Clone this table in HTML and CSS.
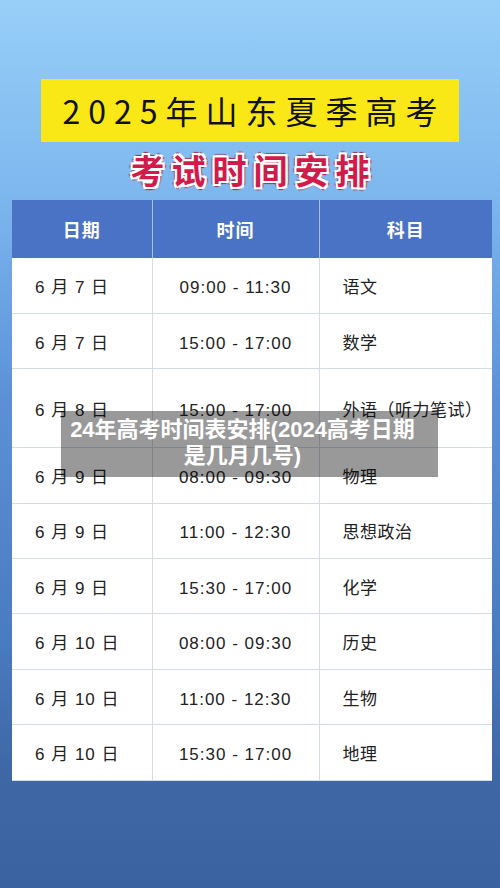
FILE: index.html
```html
<!DOCTYPE html>
<html lang="zh-CN">
<head>
    <meta charset="UTF-8">
    <title>2025年山东夏季高考考试时间安排</title>
    <link rel="stylesheet" href="styles.css">
</head>
<body>

    <div class="poster">
        <div class="banner">2025年山东夏季高考</div>
        <h1 class="subtitle">考试时间安排</h1>

        <table class="schedule">
            <thead>
                <tr>
                    <th class="col-date">日期</th>
                    <th class="col-time">时间</th>
                    <th class="col-subject">科目</th>
                </tr>
            </thead>
            <tbody>
                <tr>
                    <td class="date">6 月 7 日</td>
                    <td class="time">09:00 - 11:30</td>
                    <td class="subject">语文</td>
                </tr>
                <tr>
                    <td class="date">6 月 7 日</td>
                    <td class="time">15:00 - 17:00</td>
                    <td class="subject">数学</td>
                </tr>
                <tr class="tall">
                    <td class="date">6 月 8 日</td>
                    <td class="time">15:00 - 17:00</td>
                    <td class="subject">外语（听力笔试）</td>
                </tr>
                <tr>
                    <td class="date">6 月 9 日</td>
                    <td class="time">08:00 - 09:30</td>
                    <td class="subject">物理</td>
                </tr>
                <tr>
                    <td class="date">6 月 9 日</td>
                    <td class="time">11:00 - 12:30</td>
                    <td class="subject">思想政治</td>
                </tr>
                <tr>
                    <td class="date">6 月 9 日</td>
                    <td class="time">15:30 - 17:00</td>
                    <td class="subject">化学</td>
                </tr>
                <tr>
                    <td class="date">6 月 10 日</td>
                    <td class="time">08:00 - 09:30</td>
                    <td class="subject">历史</td>
                </tr>
                <tr>
                    <td class="date">6 月 10 日</td>
                    <td class="time">11:00 - 12:30</td>
                    <td class="subject">生物</td>
                </tr>
                <tr>
                    <td class="date">6 月 10 日</td>
                    <td class="time">15:30 - 17:00</td>
                    <td class="subject">地理</td>
                </tr>
            </tbody>
        </table>

        <div class="caption">24年高考时间表安排(2024高考日期是几月几号)</div>
    </div>

</body>
</html>
```

FILE: styles.css
```css
* {
    margin: 0;
    padding: 0;
    box-sizing: border-box;
}

body {
    font-family: "Liberation Sans", "Noto Sans CJK SC", sans-serif;
    color: #222;
}

.poster {
    position: relative;
    width: 500px;
    height: 888px;
    padding-top: 79px;
    overflow: hidden;
    background: linear-gradient(to bottom, #97cff8 0%, #7db7ee 22%, #5b90d8 45%, #4a7bc0 72%, #3f68a6 86%, #3b62a0 100%);
}

.banner {
    height: 63px;
    margin: 0 41px;
    background-color: #f9e816;
    font-family: "Noto Sans CJK SC", sans-serif;
    font-size: 32px;
    letter-spacing: 8px;
    line-height: 63px;
    text-align: center;
    text-indent: 8px;
    color: #111;
}

.subtitle {
    height: 58px;
    padding-top: 8px;
    font-family: "Noto Sans CJK SC", sans-serif;
    font-size: 34px;
    font-weight: bold;
    letter-spacing: 7px;
    line-height: 40px;
    text-align: center;
    text-indent: 7px;
    color: #d21a4b;
    text-shadow:
        2px 0 0 #fff, -2px 0 0 #fff, 0 2px 0 #fff, 0 -2px 0 #fff,
        2px 2px 0 #fff, -2px 2px 0 #fff, 2px -2px 0 #fff, -2px -2px 0 #fff,
        3px 0 1px #b0283f, -3px 0 1px #b0283f, 0 3px 1px #b0283f, 0 -3px 1px #b0283f;
}

.schedule {
    width: 480px;
    margin-left: 12px;
    border-collapse: collapse;
    table-layout: fixed;
    background-color: #fff;
}

    .schedule th {
        height: 58px;
        background-color: #4a72c5;
        color: #fff;
        font-family: "Noto Sans CJK SC", sans-serif;
        font-size: 18px;
        font-weight: bold;
        letter-spacing: 1px;
        text-align: center;
        border-left: 1px solid #a9bde6;
    }

        .schedule th:first-child {
            border-left: none;
        }

    .schedule .col-date {
        width: 140px;
    }

    .schedule .col-time {
        width: 167px;
    }

    .schedule td {
        height: 55.4px;
        font-size: 17px;
        letter-spacing: 1px;
        border: 1px solid #d3dde8;
        vertical-align: middle;
    }

    .schedule tr.tall td {
        height: 79px;
    }

    .schedule tr:first-child td {
        border-top: none;
    }

    .schedule td:first-child {
        border-left: none;
    }

    .schedule td:last-child {
        border-right: none;
    }

    .schedule .date {
        padding-left: 23px;
    }

    .schedule .time {
        padding-top: 5px;
        text-align: center;
    }

    .schedule .subject {
        padding-left: 23px;
        white-space: nowrap;
        letter-spacing: 0.5px;
    }

.caption {
    position: absolute;
    top: 411px;
    left: 61px;
    width: 377px;
    height: 66px;
    padding: 6px 20px 0 6px;
    background-color: rgba(0, 0, 0, 0.4);
    color: #fff;
    font-family: "Liberation Sans", "Noto Sans CJK SC", sans-serif;
    font-size: 22px;
    font-weight: bold;
    line-height: 26px;
    text-align: center;
}
```
